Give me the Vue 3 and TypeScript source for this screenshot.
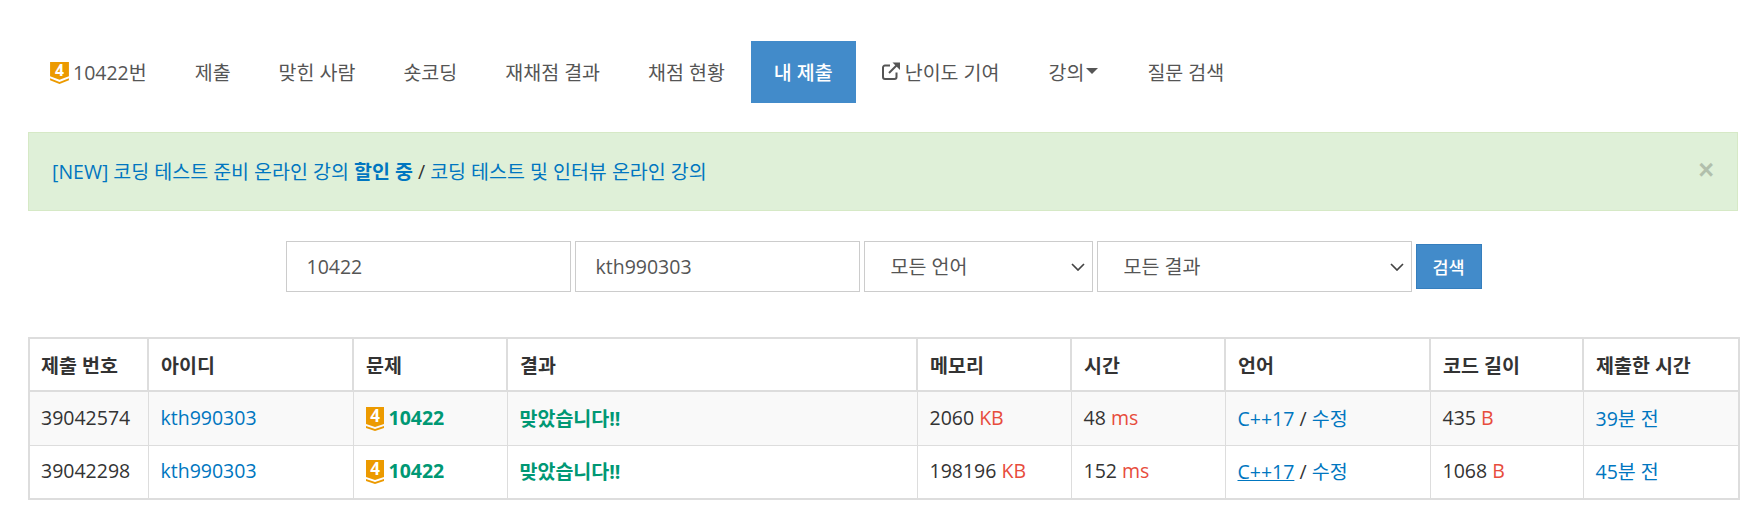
<script setup lang="ts">
interface Row {
  id: number
  memory: number
  time: number
  length: number
  ago: string
  underline?: boolean
}

const tabs = ['제출', '맞힌 사람', '숏코딩', '재채점 결과', '채점 현황']
const headers = ['제출 번호', '아이디', '문제', '결과', '메모리', '시간', '언어', '코드 길이', '제출한 시간']
const widths = [119, 205, 154, 410, 154, 154, 205, 153, 156]
const rows: Row[] = [
  { id: 39042574, memory: 2060, time: 48, length: 435, ago: '39분 전' },
  { id: 39042298, memory: 198196, time: 152, length: 1068, ago: '45분 전', underline: true },
]
</script>

<template>
  <div class="page">
    <ul class="tabs">
      <li class="tab first">
        <svg class="tier" viewBox="0 0 18 21"><path d="M0 0H18V13.5L9 17L0 13.5Z" /><path d="M0 15.5L9 19L18 15.5V17.5L9 21L0 17.5Z" /><text x="9" y="13">4</text></svg>
        <span>10422번</span>
      </li>
      <li v-for="tab in tabs" :key="tab" class="tab">{{ tab }}</li>
      <li class="tab active">내 제출</li>
      <li class="tab ext-tab">
        <svg class="ext" viewBox="0 0 20 20"><path d="M15.5 11.5V16a2 2 0 0 1-2 2H4a2 2 0 0 1-2-2V6.5a2 2 0 0 1 2-2h5" /><path d="M8 12L17 3" /><path class="fill" d="M11.5 1.5H19V9Z" /></svg>
        <span>난이도 기여</span>
      </li>
      <li class="tab caret-tab">강의<i class="caret"></i></li>
      <li class="tab">질문 검색</li>
    </ul>

    <div class="alert">
      <span><a>[NEW] 코딩 테스트 준비 온라인 강의 <b>할인 중</b></a> / <a>코딩 테스트 및 인터뷰 온라인 강의</a></span>
      <span class="close">×</span>
    </div>

    <form class="search" @submit.prevent>
      <input class="field w-input" value="10422" />
      <input class="field w-input" value="kth990303" />
      <select class="field w-lang"><option>모든 언어</option></select>
      <select class="field w-result"><option>모든 결과</option></select>
      <button class="btn">검색</button>
    </form>

    <table class="status">
      <colgroup>
        <col v-for="w in widths" :key="w + 'c'" :style="{ width: w + 'px' }" />
      </colgroup>
      <thead>
        <tr><th v-for="h in headers" :key="h">{{ h }}</th></tr>
      </thead>
      <tbody>
        <tr v-for="row in rows" :key="row.id">
          <td>{{ row.id }}</td>
          <td><a>kth990303</a></td>
          <td class="problem">
            <svg class="tier small" viewBox="0 0 18 24"><path d="M0 0H18V17L9 20L0 17Z" /><path d="M0 19L9 22L18 19V21L9 24L0 21Z" /><text x="9" y="15">4</text></svg>
            <b>10422</b>
          </td>
          <td class="ac">맞았습니다!!</td>
          <td>{{ row.memory }} <span class="unit">KB</span></td>
          <td>{{ row.time }} <span class="unit">ms</span></td>
          <td><a :class="{ under: row.underline }">C++17</a> / <a>수정</a></td>
          <td>{{ row.length }} <span class="unit">B</span></td>
          <td><a>{{ row.ago }}</a></td>
        </tr>
      </tbody>
    </table>
  </div>
</template>

<style>
body {
  margin: 0;
  background: #fff;
}
</style>

<style scoped>
.page {
  padding: 41px 11px 0 28px;
  font-family: 'Open Sans', 'Noto Sans CJK KR', sans-serif;
  font-size: 19.5px;
  color: #333;
}

.tabs {
  display: flex;
  margin: 0 0 29px;
  padding: 0;
  list-style: none;
  height: 62px;
}

.tab {
  display: flex;
  align-items: center;
  padding: 0 24px 2px;
  color: #555;
}

.tab.first {
  padding-left: 22px;
}

.tab.active {
  margin-left: 2px;
  padding: 0 23px 2px;
  background: #428bca;
  color: #fff;
  font-weight: 500;
}

.ext-tab {
  padding-left: 25px;
  padding-right: 25px;
}

.caret-tab {
  padding-right: 25px;
}

.tier {
  width: 19px;
  height: 22px;
  margin: 3px 4px 0 0;
  fill: #ec9a00;
  overflow: visible;
}

.tier text {
  fill: #fff;
  font-size: 15px;
  font-weight: 700;
  text-anchor: middle;
}

.tier.small {
  width: 18px;
  height: 24px;
  margin: 0 5px 0 0;
  vertical-align: -6px;
}

.tier.small text {
  font-size: 17px;
}

.ext {
  width: 20px;
  height: 20px;
  margin-right: 4px;
  fill: none;
  stroke: #555;
  stroke-width: 2;
}

.ext .fill {
  fill: #555;
  stroke: none;
}

.caret {
  width: 0;
  height: 0;
  margin-left: 2px;
  border-top: 6px solid #555;
  border-left: 6px solid transparent;
  border-right: 6px solid transparent;
}

.alert {
  display: flex;
  justify-content: space-between;
  align-items: center;
  box-sizing: border-box;
  height: 79px;
  padding: 0 23px 2px;
  background: #dff0d8;
  border: 1px solid #d6e9c6;
  color: #333;
}

a {
  color: #0076c0;
}

.under {
  text-decoration: underline;
}

.close {
  color: #000;
  opacity: 0.2;
  font-size: 27px;
  font-weight: 700;
  font-family: 'Liberation Sans', sans-serif;
}

.search {
  display: flex;
  justify-content: center;
  align-items: center;
  gap: 4px;
  margin: 30px 0 45px;
  padding-left: 1px;
}

.field {
  box-sizing: border-box;
  height: 51px;
  padding: 0 20px;
  background: #fff;
  border: 1px solid #ccc;
  border-radius: 0;
  color: #555;
  font: inherit;
}

select.field {
  appearance: none;
  background: #fff url("data:image/svg+xml,%3Csvg xmlns='http://www.w3.org/2000/svg' width='14' height='8' viewBox='0 0 14 8'%3E%3Cpath d='M1 1l6 6 6-6' fill='none' stroke='%23444' stroke-width='1.7'/%3E%3C/svg%3E") no-repeat right 7px center;
  padding-left: 26px;
}

.w-input {
  width: 285px;
}

.w-lang {
  width: 229px;
}

.w-result {
  width: 315px;
}

.btn {
  width: 66px;
  height: 45px;
  background: #428bca;
  border: 1px solid #357ebd;
  color: #fff;
  font-family: inherit;
  font-size: 17.5px;
  font-weight: 500;
}

.status {
  width: 1710px;
  table-layout: fixed;
  border-collapse: collapse;
  border: 2px solid #ddd;
}

th,
td {
  box-sizing: border-box;
  padding: 0 12px;
  text-align: left;
  border: 1px solid #ddd;
}

th:first-child,
td:first-child {
  padding-left: 11px;
}

th {
  height: 53px;
  border-width: 2px;
  border-color: #ddd;
  font-weight: 700;
}

td {
  height: 54px;
  padding-bottom: 2px;
}

tbody tr:nth-child(odd) {
  background: #f9f9f9;
}

.problem b,
.ac {
  color: #009874;
  font-weight: 700;
}

.unit {
  color: #e74c3c;
}
</style>
